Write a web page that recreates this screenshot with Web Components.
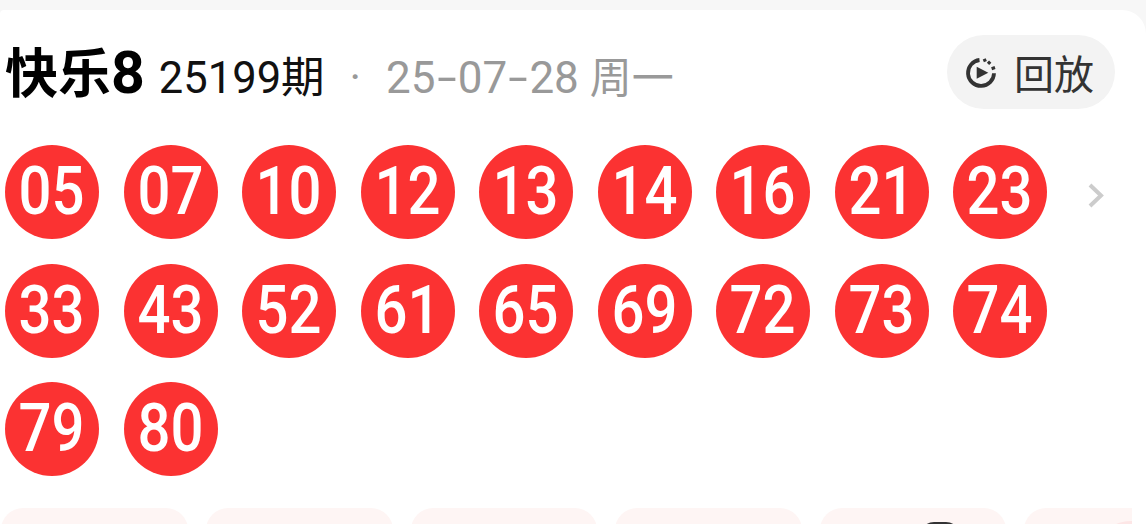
<!DOCTYPE html>
<html lang="zh">
<head>
<meta charset="utf-8">
<title>快乐8</title>
<style>
  html, body { margin: 0; height: 100%; background: #f7f7f7; overflow: hidden; }
  body { font-family: "Roboto", "Noto Sans CJK SC", sans-serif; }
</style>
</head>
<body>
<lottery-card></lottery-card>

<script>
class ReplayButton extends HTMLElement {
  constructor() {
    super();
    const shadow = this.attachShadow({ mode: 'open' });
    shadow.innerHTML = `
      <style>
        :host {
          display: flex;
          align-items: center;
          gap: 18px;
          width: 168px;
          height: 74px;
          box-sizing: border-box;
          padding-left: 18px;
          border-radius: 37px;
          background: #f3f3f3;
          color: #333;
          font: 400 40px "Noto Sans CJK SC", sans-serif;
        }
        svg { width: 31px; height: 31px; flex: none; }
      </style>
      <svg viewBox="0 0 31 31" fill="none" stroke="#333">
        <path d="M14.500 3A13 13 0 1 0 29 16.200" stroke-width="3.800"/>
        <path d="M19.200 1.800l1.200 2.800M25.200 4.600l-2.200 2.300M30 10.600l-3.400 1.100" stroke-width="3.200"/>
        <path d="M11.700 9.700l11.600 6-11.600 6z" fill="#333" stroke="none"/>
      </svg>
      <span><slot></slot></span>
    `;
  }
}

class NumberBall extends HTMLElement {
  constructor() {
    super();
    const shadow = this.attachShadow({ mode: 'open' });
    shadow.innerHTML = `
      <style>
        :host {
          display: flex;
          align-items: center;
          justify-content: center;
          width: 94px;
          height: 94px;
          border-radius: 50%;
          background: #fb3232;
          color: #fff;
          font: 500 66px "Roboto", sans-serif;
          line-height: 96px;
        }
        span { display: inline-block; transform: scaleX(.88); }
      </style>
      <span><slot></slot></span>
    `;
  }
}

class LotteryCard extends HTMLElement {
  constructor() {
    super();
    const shadow = this.attachShadow({ mode: 'open' });
    const numbers = ['05','07','10','12','13','14','16','21','23','33','43','52','61','65','69','72','73','74','79','80'];
    shadow.innerHTML = `
      <style>
        :host {
          display: block;
          height: 514px;
          margin-top: 10px;
          background: #fff;
          border-radius: 4px 24px 0 0;
          overflow: hidden;
        }
        .head {
          display: flex;
          align-items: center;
          height: 74px;
          margin-top: 25px;
          padding: 0 31px 0 5px;
        }
        .info {
          display: flex;
          align-items: baseline;
          flex: 1;
          padding-bottom: 4px;
          font: 400 44px "Roboto", "Noto Sans CJK SC", sans-serif;
        }
        h1 { margin: 0; font: 700 53px "Noto Sans CJK SC", sans-serif; color: #000; }
        h1 b { font: 700 59px "Roboto", sans-serif; }
        .issue { margin-left: 14px; color: #111; font-size: 43.500px; white-space: pre; }
        .dot { margin-left: 25px; color: #999; }
        .date { margin-left: 25px; color: #999; white-space: pre; }
        .date i { display: inline-block; font-style: normal; margin: 0 5px; transform: scaleX(1.6); }
        .date span { font-size: 42px; }
        .numbers { display: flex; align-items: flex-start; margin: 36px 0 0 5px; }
        .balls {
          display: grid;
          grid-template-columns: repeat(9, 94px);
          gap: 24.500px;
        }
        .more { width: 18px; height: 26px; margin: 38px 0 0 40px; flex: none; }
        .tabs { display: flex; gap: 18px; margin: 32px 0 0 1px; width: 1133px; }
        .tab {
          flex: none;
          height: 40px;
          border-radius: 22px 22px 0 0;
          background: #fef5f4;
          position: relative;
          overflow: hidden;
        }
        .tab:last-child { border-top-right-radius: 0; }
        .mark-dark { position: absolute; left: 100px; top: 14px; width: 40px; height: 30px; border-radius: 14px 14px 0 0; background: #333; }
        .mark-pink { position: absolute; left: 82px; top: 13px; width: 50px; height: 30px; border-radius: 50%; background: #fde6e6; }
      </style>
      <div class="head">
        <div class="info">
          <h1>快乐<b>8</b></h1>
          <span class="issue">25199期</span>
          <span class="dot">·</span>
          <span class="date">25<i>-</i>07<i>-</i>28 <span>周一</span></span>
        </div>
        <replay-button>回放</replay-button>
      </div>
      <div class="numbers">
        <div class="balls">
          ${numbers.map(n => `<number-ball>${n}</number-ball>`).join('')}
        </div>
        <svg class="more" viewBox="0 0 18 26" fill="none" stroke="#ccc" stroke-width="4">
          <path d="M3 2l11 10.500L3 23"/>
        </svg>
      </div>
      <div class="tabs">
        <div class="tab" style="width:187px"></div>
        <div class="tab" style="width:187px"></div>
        <div class="tab" style="width:186px"></div>
        <div class="tab" style="width:187px"></div>
        <div class="tab" style="width:186px"><span class="mark-dark"></span></div>
        <div class="tab" style="width:108px"><span class="mark-pink"></span></div>
      </div>
    `;
  }
}

customElements.define('replay-button', ReplayButton);
customElements.define('number-ball', NumberBall);
customElements.define('lottery-card', LotteryCard);
</script>
</body>
</html>
